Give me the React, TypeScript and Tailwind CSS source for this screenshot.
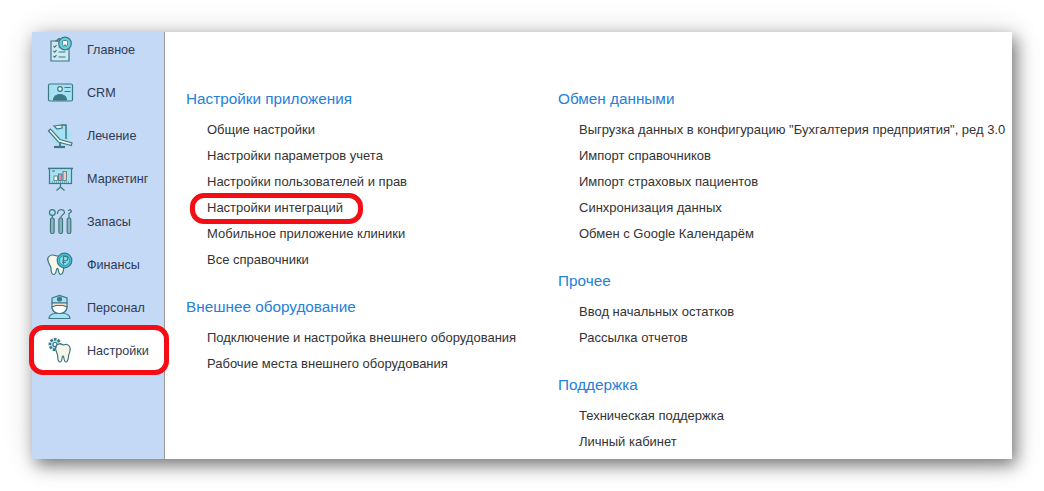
import React from "react";

const ink = "#3f7782";

function IconHome() {
  return (
    <svg width="36" height="36" viewBox="0 0 36 36" fill="none" stroke={ink} strokeWidth="1.2">
      <path d="M8 9h18v20H8z" fill="#cfe9f2" />
      <path d="M13 9l3-2.500 3 2.500z" fill="#ee8aa2" />
      <path d="M10.500 14l1.200 1.200 1.800-2M10.500 19l1.200 1.200 1.800-2M10.500 24l1.200 1.200 1.800-2M15.500 15h7M15.500 20h7M15.500 25h7" strokeWidth="1.1" />
      <circle cx="22" cy="11.500" r="6.300" fill="#66cfe3" />
      <path d="M19.500 9c1.600-.8 3.400-.8 5 0 .6 2-.4 5-1.200 5.500l-1.300-2-1.300 2c-.8-.5-1.800-3.500-1.200-5.500z" fill="#fff" strokeWidth="0.9" />
    </svg>
  );
}

function IconCrm() {
  return (
    <svg width="36" height="36" viewBox="0 0 36 36" fill="none" stroke={ink} strokeWidth="1.2">
      <rect x="5.500" y="9" width="24" height="17" rx="1.500" fill="#a5e2f5" />
      <circle cx="17" cy="14" r="2.300" fill="#eef7f8" />
      <path d="M10.500 25c0-3.500 3-5.500 6.500-5.500s6.500 2 6.500 5.500z" fill={ink} />
      <path d="M21.500 12.500h6M21.500 16.500h6" />
    </svg>
  );
}

function IconTreatment() {
  return (
    <svg width="36" height="36" viewBox="0 0 36 36" fill="none" stroke={ink} strokeWidth="1.2">
      <circle cx="18" cy="17" r="10" fill="#a5e2f5" stroke="none" />
      <path d="M11 8l8-1v3l-5 1z" fill="#e6f2f4" />
      <path d="M19 7h4v14" strokeWidth="1.500" />
      <path d="M5.500 13l2-2 9.500 10.500 12 3.500-.8 2.500L15.500 24z" fill="#f4fafa" />
      <path d="M17 25v3" strokeWidth="1.800" />
      <path d="M11 29h11" strokeWidth="2.200" />
    </svg>
  );
}

function IconMarketing() {
  return (
    <svg width="36" height="36" viewBox="0 0 36 36" fill="none" stroke={ink} strokeWidth="1.2">
      <path d="M5 7.500h25" strokeWidth="1.500" />
      <rect x="6.500" y="7.500" width="22" height="15" fill="#a5e2f5" />
      <path d="M9 10h3" strokeWidth="1" />
      <rect x="11" y="15" width="3.500" height="4.500" fill="#f4fafa" strokeWidth="0.8" />
      <rect x="15.500" y="13" width="3.500" height="6.500" fill="#ee8aa2" strokeWidth="0.8" />
      <rect x="20" y="10.500" width="3.500" height="9" fill="#f6c7bd" strokeWidth="0.8" />
      <path d="M9 21h17" strokeWidth="0.9" strokeDasharray="1 1" />
      <path d="M17.500 22.500v4M17.500 26l-4 3.500M17.500 26l4 3.500" />
    </svg>
  );
}

function IconStock() {
  return (
    <svg width="36" height="36" viewBox="0 0 36 36" fill="none" stroke={ink} strokeWidth="1.2">
      <circle cx="9.300" cy="8.500" r="2.900" fill="#a5e2f5" />
      <path d="M9.300 11.400V14" />
      <rect x="7.500" y="14" width="3.600" height="15.500" rx="1.500" fill="#8fb6bb" />
      <path d="M14.500 10c0-5.500 7-5.500 7-1.500 0 2-3.800 2.200-3.800 5.500" />
      <rect x="15.900" y="14" width="3.600" height="15.500" rx="1.500" fill="#8fb6bb" />
      <path d="M25 6.500l2.500-.8 1 1.800-2.500 2V14" />
      <rect x="24.200" y="14" width="3.600" height="15.500" rx="1.500" fill="#8fb6bb" />
    </svg>
  );
}

function IconFinance() {
  return (
    <svg width="36" height="36" viewBox="0 0 36 36" fill="none" stroke={ink} strokeWidth="1.2">
      <path d="M4.500 13c0-3 2.500-5 5-5 2 0 3 1 5 1s3-1 5 0c3 1 3.500 4 3 7-.5 3-2 4-2 6s-1 5.500-2.800 5.500-2-2.500-2.400-5c-.3-1.500-1.400-1.500-1.800 0-.4 2.500-1 5-2.800 5s-2.700-2.500-2.700-6c0-3-3-4.500-3-8.500z" fill="#f8f7ec" />
      <circle cx="21.500" cy="13.500" r="7.300" fill="#3fc3dc" />
      <circle cx="21.500" cy="13.500" r="5" fill="#82dfee" strokeWidth="0.7" />
      <path d="M20.500 17.500v-8h2.200a2 2 0 010 4.200h-3.500M19.200 15.500h3.500" strokeWidth="1.100" />
    </svg>
  );
}

function IconStaff() {
  return (
    <svg width="36" height="36" viewBox="0 0 36 36" fill="none" stroke={ink} strokeWidth="1.2">
      <path d="M6 28.500c0-4 3.500-5.500 10.500-5.500s10.500 1.500 10.500 5.500z" fill="#a5e2f5" />
      <path d="M9 8l7.500-2.500L24 8v5H9z" fill="#a5e2f5" />
      <circle cx="16.500" cy="9" r="2" fill={ink} />
      <path d="M9 13h15v4c0 4-3.500 6.500-7.500 6.500S9 21 9 17z" fill="#f8dcc8" />
      <path d="M9 17l4-1.500h7l4 1.500c0 4-3.500 6.500-7.500 6.500S9 21 9 17z" fill="#fff" />
    </svg>
  );
}

function IconSettings() {
  return (
    <svg width="36" height="36" viewBox="0 0 36 36" fill="none" stroke={ink} strokeWidth="1.2">
      <circle cx="12" cy="11.500" r="5.200" fill="#a5e2f5" strokeDasharray="2.600 1.200" strokeWidth="2.600" />
      <circle cx="12" cy="11.500" r="2" fill="#fff" />
      <path d="M13 14.500c0-2.500 2-3.500 4-3.500 1.500 0 2 .8 3.500.8s2-.8 3.500-.3c2.500.8 3.500 3.500 3 6.500-.5 2.500-1.500 3.500-1.500 5.500s-1 5.500-2.500 5.500-2-2.500-2.300-5c-.2-1.300-1.200-1.300-1.400 0-.3 2.500-.8 5-2.300 5s-2.300-2.500-2.300-6c0-3-2.200-4-2.200-8.500z" fill="#f5f5ea" />
    </svg>
  );
}

const navItems = [
  { label: "Главное", icon: <IconHome /> },
  { label: "CRM", icon: <IconCrm /> },
  { label: "Лечение", icon: <IconTreatment /> },
  { label: "Маркетинг", icon: <IconMarketing /> },
  { label: "Запасы", icon: <IconStock /> },
  { label: "Финансы", icon: <IconFinance /> },
  { label: "Персонал", icon: <IconStaff /> },
  { label: "Настройки", icon: <IconSettings />, active: true },
];

const leftColumn = [
  {
    title: "Настройки приложения",
    links: [
      "Общие настройки",
      "Настройки параметров учета",
      "Настройки пользователей и прав",
      "Настройки интеграций",
      "Мобильное приложение клиники",
      "Все справочники",
    ],
  },
  {
    title: "Внешнее оборудование",
    links: ["Подключение и настройка внешнего оборудования", "Рабочие места внешнего оборудования"],
  },
];

const rightColumn = [
  {
    title: "Обмен данными",
    links: [
      'Выгрузка данных в конфигурацию "Бухгалтерия предприятия", ред 3.0',
      "Импорт справочников",
      "Импорт страховых пациентов",
      "Синхронизация данных",
      "Обмен с Google Календарём",
    ],
  },
  { title: "Прочее", links: ["Ввод начальных остатков", "Рассылка отчетов"] },
  { title: "Поддержка", links: ["Техническая поддержка", "Личный кабинет"] },
];

function Section({ title, links }: { title: string; links: string[] }) {
  return (
    <div className="mb-[21px]">
      <h2 className="h-[26px] text-[15.3px] leading-[26px] font-normal text-[#2580d8] whitespace-nowrap">{title}</h2>
      <ul className="mt-[5px] pl-[21px]">
        {links.map((link) => (
          <li key={link} className="relative h-[26px] text-[13px] leading-[26px] text-[#333] whitespace-nowrap">
            {link}
            {link === "Настройки интеграций" && (
              <span className="absolute left-[-17px] top-[-2px] w-[173px] h-[31px] rounded-[14px] border-[5px] border-[#f40d15]" />
            )}
          </li>
        ))}
      </ul>
    </div>
  );
}

export default function App() {
  return (
    <div className="w-[1044px] h-[491px] bg-white pt-8 pl-8 overflow-hidden font-['Liberation_Sans',Arial,sans-serif]">
      <div className="flex w-[980px] h-[427px] bg-white shadow-[4px_6px_16px_rgba(0,0,0,0.5),0_0_30px_rgba(0,0,0,0.12)]">
        <aside className="w-[133px] shrink-0 bg-[#c3d9f5] border-r border-r-[#9a9a9a]">
          <div className="-mt-[4px]">
            {navItems.map((item) => (
              <div key={item.label} className="relative flex items-center h-[43px] pl-[11px] text-[12.6px] text-[#2f3a55]">
                {item.active && (
                  <span className="absolute left-[-3px] top-[-4px] w-[140px] h-[50px] bg-white rounded-[14px] border-[5px] border-[#f40d15]" />
                )}
                <span className="relative w-[36px] h-[36px] shrink-0">{item.icon}</span>
                <span className="relative ml-[8px] mt-[2px]">{item.label}</span>
              </div>
            ))}
          </div>
        </aside>
        <main className="flex-1 relative pt-[54px] pl-[21px] flex">
          <div className="w-[372px] shrink-0">
            {leftColumn.map((s) => (
              <Section key={s.title} {...s} />
            ))}
          </div>
          <div>
            {rightColumn.map((s) => (
              <Section key={s.title} {...s} />
            ))}
          </div>
        </main>
      </div>
    </div>
  );
}
